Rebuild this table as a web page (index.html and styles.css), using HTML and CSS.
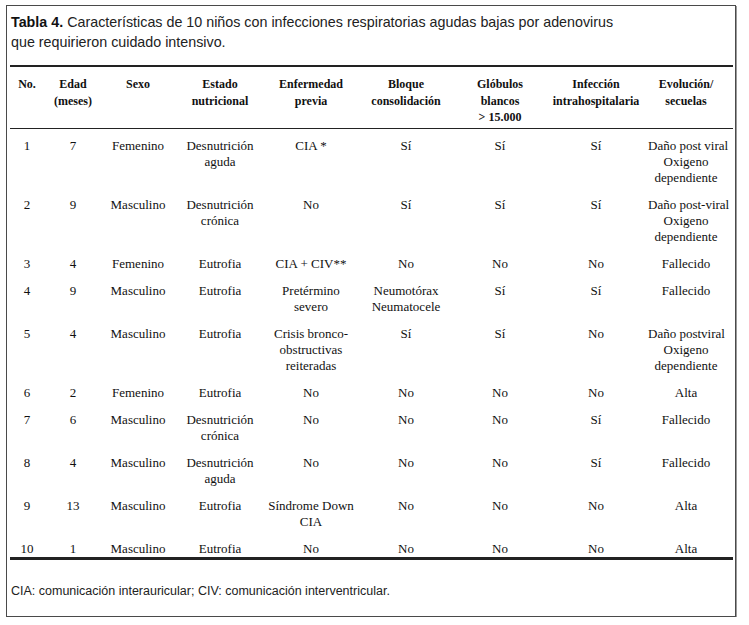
FILE: index.html
```html
<!DOCTYPE html>
<html lang="es">
<head>
<meta charset="utf-8">
<title>Tabla 4</title>
<link rel="stylesheet" href="styles.css">
</head>
<body>
<div class="box">
  <p class="caption"><b>Tabla 4.</b> Características de 10 niños con infecciones respiratorias agudas bajas por adenovirus<br>que requirieron cuidado intensivo.</p>
  <table class="data">
    <colgroup>
      <col class="c1"><col class="c2"><col class="c3"><col class="c4"><col class="c5"><col class="c6"><col class="c7"><col class="c8"><col class="c9">
    </colgroup>
    <thead>
      <tr>
        <th>No.</th>
        <th>Edad<br>(meses)</th>
        <th>Sexo</th>
        <th>Estado<br>nutricional</th>
        <th>Enfermedad<br>previa</th>
        <th>Bloque<br>consolidación</th>
        <th>Glóbulos<br>blancos<br>&gt; 15.000</th>
        <th>Infección<br>intrahospitalaria</th>
        <th>Evolución/<br>secuelas</th>
      </tr>
    </thead>
    <tbody>
      <tr><td>1</td><td>7</td><td>Femenino</td><td>Desnutrición<br>aguda</td><td>CIA *</td><td>Sí</td><td>Sí</td><td>Sí</td><td>Daño post viral<br>Oxigeno<br>dependiente</td></tr>
      <tr><td>2</td><td>9</td><td>Masculino</td><td>Desnutrición<br>crónica</td><td>No</td><td>Sí</td><td>Sí</td><td>Sí</td><td>Daño post-viral<br>Oxigeno<br>dependiente</td></tr>
      <tr><td>3</td><td>4</td><td>Femenino</td><td>Eutrofia</td><td>CIA + CIV**</td><td>No</td><td>No</td><td>No</td><td>Fallecido</td></tr>
      <tr><td>4</td><td>9</td><td>Masculino</td><td>Eutrofia</td><td>Pretérmino<br>severo</td><td>Neumotórax<br>Neumatocele</td><td>Sí</td><td>Sí</td><td>Fallecido</td></tr>
      <tr><td>5</td><td>4</td><td>Masculino</td><td>Eutrofia</td><td>Crisis bronco-<br>obstructivas<br>reiteradas</td><td>Sí</td><td>Sí</td><td>No</td><td>Daño postviral<br>Oxigeno<br>dependiente</td></tr>
      <tr><td>6</td><td>2</td><td>Femenino</td><td>Eutrofia</td><td>No</td><td>No</td><td>No</td><td>No</td><td>Alta</td></tr>
      <tr><td>7</td><td>6</td><td>Masculino</td><td>Desnutrición<br>crónica</td><td>No</td><td>No</td><td>No</td><td>Sí</td><td>Fallecido</td></tr>
      <tr><td>8</td><td>4</td><td>Masculino</td><td>Desnutrición<br>aguda</td><td>No</td><td>No</td><td>No</td><td>Sí</td><td>Fallecido</td></tr>
      <tr><td>9</td><td>13</td><td>Masculino</td><td>Eutrofia</td><td>Síndrome Down<br>CIA</td><td>No</td><td>No</td><td>No</td><td>Alta</td></tr>
      <tr><td>10</td><td>1</td><td>Masculino</td><td>Eutrofia</td><td>No</td><td>No</td><td>No</td><td>No</td><td>Alta</td></tr>
    </tbody>
  </table>
  <p class="note">CIA: comunicación interauricular; CIV: comunicación interventricular.</p>
</div>
</body>
</html>
```

FILE: styles.css
```css
html, body {
  margin: 0;
  padding: 0;
  background: #ffffff;
}

.box {
  margin: 5px 0 0 6px;
  width: 730px;
  height: 612px;
  box-sizing: border-box;
  border: 1px solid #4a4a4a;
  box-shadow: 1px 1px 0 #9a9a9a;
  padding: 6px 3px 0 3px;
  color: #1a1a1a;
}

.caption {
  margin: 0 0 13px 1px;
  font-family: "Liberation Sans", Arial, sans-serif;
  font-size: 14.3px;
  line-height: 20px;
  color: #222;
}

.caption b {
  font-weight: bold;
  color: #111;
}

.data {
  width: 723px;
  border-collapse: collapse;
  table-layout: fixed;
  font-family: "Liberation Serif", "Times New Roman", serif;
  font-size: 13px;
  color: #111;
}

.c1 { width: 34px; }
.c2 { width: 58px; }
.c3 { width: 72px; }
.c4 { width: 92px; }
.c5 { width: 90px; }
.c6 { width: 100px; }
.c7 { width: 88px; }
.c8 { width: 104px; }
.c9 { width: 85px; }

.data thead tr {
  border-top: 2px solid #222;
  border-bottom: 1px solid #222;
}

.data th {
  font-size: 12px;
  font-weight: bold;
  line-height: 16.5px;
  text-align: center;
  vertical-align: top;
  padding: 9px 0 2px 0;
  white-space: nowrap;
}

.data td {
  text-align: center;
  vertical-align: top;
  line-height: 16px;
  padding: 5px 0 6px 0;
  white-space: nowrap;
}

.data th:last-child,
.data td:last-child {
  padding-right: 9px;
}

.data tbody tr:first-child td {
  padding-top: 9px;
}

.data tbody tr:last-child td {
  padding-bottom: 0;
}

.data tbody tr:last-child {
  border-bottom: 3px solid #222;
}

.note {
  margin: 23px 0 0 1px;
  font-family: "Liberation Sans", Arial, sans-serif;
  font-size: 12.5px;
  line-height: 16px;
  color: #222;
}
```
